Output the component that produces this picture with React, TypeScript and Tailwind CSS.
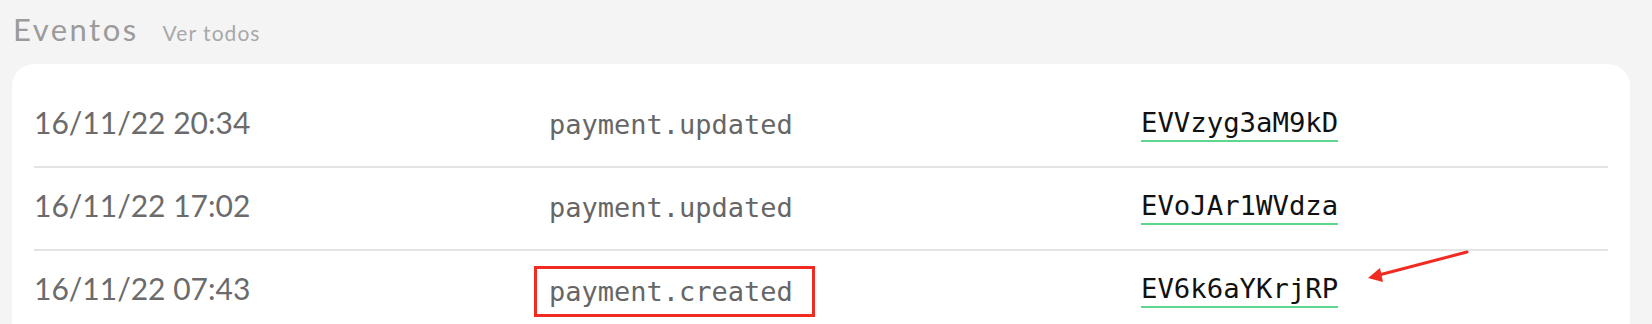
import React from "react";

interface EventRow {
  id: string;
  date: string;
  type: string;
  eventId: string;
  highlighted?: boolean;
}

const events: EventRow[] = [
  { id: "1", date: "16/11/22 20:34", type: "payment.updated", eventId: "EVVzyg3aM9kD" },
  { id: "2", date: "16/11/22 17:02", type: "payment.updated", eventId: "EVoJAr1WVdza" },
  { id: "3", date: "16/11/22 07:43", type: "payment.created", eventId: "EV6k6aYKrjRP", highlighted: true },
];

export default function App() {
  return (
    <div className="w-full h-[324px] overflow-hidden bg-[#f4f4f4] font-['Lato',sans-serif]">
      {/* Header */}
      <div className="flex items-baseline gap-[24px] pl-[13px] pt-[11px] pb-[17px]">
        <h2 className="text-[31px] leading-[36px] tracking-[0.08em] text-[#9b9b9b] font-normal">Eventos</h2>
        <button className="text-[21px] leading-[26px] tracking-[0.05em] text-[#a8a8a8]">Ver todos</button>
      </div>

      {/* Events card */}
      <div className="relative ml-[12px] mr-[22px] bg-white rounded-[22px] px-[22px] pt-[21px] h-[300px]">
        {events.map((row) => (
          <div
            key={row.id}
            className="grid grid-cols-[515px_592px_1fr] items-center h-[83px] border-b-2 border-[#e4e4e4]"
          >
            <span className="text-[30px] leading-[36px] pb-[8px] text-[#6b6b6b]">{row.date}</span>
            <div>
              {row.highlighted ? (
                <span className="inline-block -ml-[15px] border-[3px] border-[#f22b22] pl-[12px] pr-[19px] py-[9px] font-['DejaVu_Sans_Mono',monospace] text-[27px] leading-[27px] text-[#666666]">
                  {row.type}
                </span>
              ) : (
                <span className="font-['DejaVu_Sans_Mono',monospace] text-[27px] leading-[27px] text-[#666666]">
                  {row.type}
                </span>
              )}
            </div>
            <div>
              <a className="inline-block pb-[4px] border-b-2 border-[#5fd68e] font-['DejaVu_Sans_Mono',monospace] text-[27.3px] leading-[27px] text-[#111111]">
                {row.eventId}
              </a>
            </div>
          </div>
        ))}

        {/* Annotation arrow */}
        <svg
          className="absolute left-[1350px] top-[180px]"
          width="125"
          height="45"
          viewBox="0 0 125 45"
          fill="none"
        >
          <line x1="105" y1="8" x2="17" y2="31" stroke="#f22b22" strokeWidth="3" strokeLinecap="round" />
          <polygon points="6,34 18,24 21,38" fill="#f22b22" />
        </svg>
      </div>
    </div>
  );
}
